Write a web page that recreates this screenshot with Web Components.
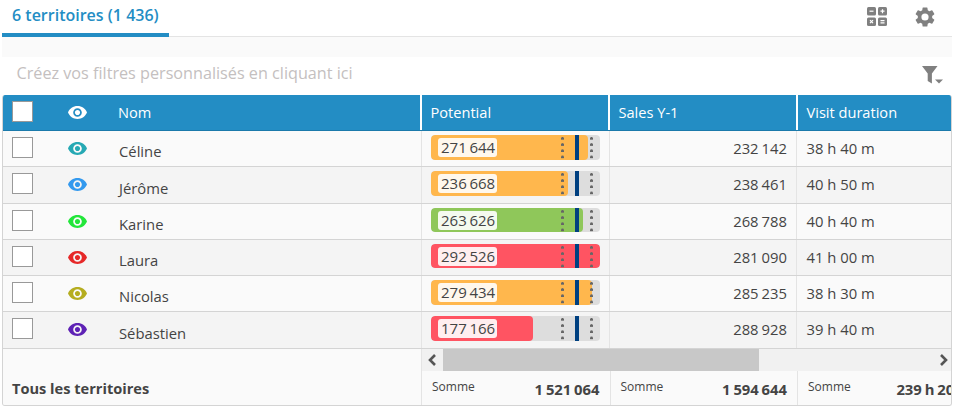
<!DOCTYPE html>
<html lang="fr">
<head>
<meta charset="utf-8">
<title>Territoires</title>
<style>
    html, body { margin: 0; padding: 0; background: #fff; }
    body { font-family: "Open Sans", sans-serif; color: #444; }
</style>
</head>
<body>
<territory-app>
    <tab-bar slot="tabs">6 territoires (1 436)</tab-bar>
    <filter-bar slot="filters">Créez vos filtres personnalisés en cliquant ici</filter-bar>
    <territory-table slot="table">
        <territory-row color="#26a9b4" value="271644" level="orange" sales="232 142" duration="38 h 40 m">Céline</territory-row>
        <territory-row alt color="#3399ee" value="236668" level="orange" sales="238 461" duration="40 h 50 m">Jérôme</territory-row>
        <territory-row color="#22e63a" value="263626" level="green" sales="268 788" duration="40 h 40 m">Karine</territory-row>
        <territory-row alt color="#e62828" value="292526" level="red" sales="281 090" duration="41 h 00 m">Laura</territory-row>
        <territory-row color="#b5ad20" value="279434" level="orange" sales="285 235" duration="38 h 30 m">Nicolas</territory-row>
        <territory-row alt color="#5e22b5" value="177166" level="red" sales="288 928" duration="39 h 40 m">Sébastien</territory-row>
    </territory-table>
</territory-app>

<script>
const EYE_PATH = 'M12 4.5C7 4.5 2.73 7.61 1 12c1.73 4.39 6 7.5 11 7.5s9.27-3.11 11-7.5c-1.73-4.39-6-7.5-11-7.5zM12 17c-2.76 0-5-2.24-5-5s2.24-5 5-5 5 2.24 5 5-2.24 5-5 5zm0-8c-1.66 0-3 1.34-3 3s1.34 3 3 3 3-1.34 3-3-1.34-3-3-3z';
const GEAR_PATH = 'M19.14 12.94c.04-.3.06-.61.06-.94s-.02-.64-.07-.94l2.03-1.58a.49.49 0 0 0 .12-.61l-1.92-3.32a.49.49 0 0 0-.59-.22l-2.39.96a7 7 0 0 0-1.62-.94l-.36-2.54a.48.48 0 0 0-.48-.41h-3.84a.47.47 0 0 0-.47.41l-.36 2.54a7.2 7.2 0 0 0-1.62.94l-2.39-.96a.48.48 0 0 0-.59.22L2.73 8.87a.47.47 0 0 0 .12.61l2.03 1.58c-.05.3-.09.63-.09.94s.02.64.07.94l-2.03 1.58a.49.49 0 0 0-.12.61l1.92 3.32c.12.22.37.29.59.22l2.39-.96c.5.38 1.03.7 1.62.94l.36 2.54c.05.24.24.41.48.41h3.84c.24 0 .44-.17.47-.41l.36-2.54a7 7 0 0 0 1.62-.94l2.39.96c.22.08.47 0 .59-.22l1.92-3.32a.47.47 0 0 0-.12-.61l-2.01-1.58zM12 15.6a3.6 3.6 0 1 1 0-7.2 3.6 3.6 0 0 1 0 7.2z';

class TerritoryApp extends HTMLElement {
    constructor() {
        super();
        this.attachShadow({ mode: 'open' });
    }

    connectedCallback() {
        this.shadowRoot.innerHTML = `
            <style>
                :host { display: flex; flex-direction: column; width: 954px; height: 412px; overflow: hidden; }
                .gap { height: 20px; background: #fafafa; margin-left: 2px; margin-right: 2px; }
            </style>
            <slot name="tabs"></slot>
            <div class="gap"></div>
            <slot name="filters"></slot>
            <slot name="table"></slot>
        `;
    }
}

class TabBar extends HTMLElement {
    constructor() {
        super();
        this.attachShadow({ mode: 'open' });
    }

    connectedCallback() {
        this.shadowRoot.innerHTML = `
            <style>
                :host { display: flex; justify-content: space-between; height: 36px; margin: 0 2px; border-bottom: 1px solid #e4e4e4; }
                .tab {
                    box-sizing: border-box;
                    width: 167px;
                    height: 38px;
                    padding: 2px 0 0 10px;
                    border-bottom: 5px solid #238dc4;
                    color: #238dc4;
                    font: 600 16px/26px "Open Sans", sans-serif;
                    white-space: nowrap;
                }
                .tools { display: flex; gap: 28px; padding: 7px 15px 0 0; }
                svg { display: block; fill: #808080; }
            </style>
            <div class="tab"><slot></slot></div>
            <div class="tools">
                <svg width="20" height="19" viewBox="0 0 20 19">
                    <rect x="0" y="0" width="9" height="8.5" rx="1.5"/>
                    <rect x="11" y="0" width="9" height="8.5" rx="1.5"/>
                    <rect x="0" y="10.5" width="9" height="8.5" rx="1.5"/>
                    <rect x="11" y="10.5" width="9" height="8.5" rx="1.5"/>
                    <g stroke="#fff" stroke-width="1.2" fill="none">
                        <path d="M2.5 4.2h4"/>
                        <path d="M13.5 4.2h4M15.5 2.2v4"/>
                        <path d="M3 13.2l3 3M6 13.2l-3 3"/>
                        <path d="M13.5 13.6h4M13.5 15.8h4"/>
                    </g>
                </svg>
                <svg width="24" height="24" viewBox="0 0 24 24" style="margin:-2px 0 0 -2px"><path d="${GEAR_PATH}"/></svg>
            </div>
        `;
    }
}

class FilterBar extends HTMLElement {
    constructor() {
        super();
        this.attachShadow({ mode: 'open' });
    }

    connectedCallback() {
        this.shadowRoot.innerHTML = `
            <style>
                :host {
                    display: flex;
                    justify-content: space-between;
                    align-items: flex-start;
                    box-sizing: border-box;
                    height: 38px;
                    padding: 5px 11px 0 16.5px;
                    color: #c4c0c0;
                    font: 400 16.2px/22px "Open Sans", sans-serif;
                }
                svg { display: block; fill: #808080; margin-top: 4px; }
            </style>
            <span><slot></slot></span>
            <svg width="21" height="18" viewBox="0 0 21 18">
                <path d="M0 0h15.5l-5.6 7.6v10l-4.2-2.6V7.6z"/>
                <path d="M13 13.5h8l-4 4z"/>
            </svg>
        `;
    }
}

class EyeIcon extends HTMLElement {
    constructor() {
        super();
        this.attachShadow({ mode: 'open' });
    }

    connectedCallback() {
        const color = this.getAttribute('color') || '#fff';
        this.shadowRoot.innerHTML = `
            <style>
                :host { display: block; width: 19px; height: 13px; }
                svg { display: block; fill: ${color}; }
            </style>
            <svg width="19" height="13" viewBox="1 4.5 22 15"><path d="${EYE_PATH}"/></svg>
        `;
    }
}

class CheckBox extends HTMLElement {
    constructor() {
        super();
        this.attachShadow({ mode: 'open' });
    }

    connectedCallback() {
        this.shadowRoot.innerHTML = `
            <style>
                :host { display: block; box-sizing: border-box; width: 21px; height: 21px; background: #fff; border: 1px solid #999; }
            </style>
        `;
    }
}

class GaugeBar extends HTMLElement {
    constructor() {
        super();
        this.attachShadow({ mode: 'open' });
    }

    connectedCallback() {
        const value = Number(this.getAttribute('value'));
        const colors = { orange: '#ffb74d', green: '#8fc75a', red: '#ff5462' };
        const pct = value / 292526 * 100;
        const label = String(value).replace(/(\d{3})$/, ' $1');
        this.shadowRoot.innerHTML = `
            <style>
                :host { display: block; position: relative; width: 169px; height: 24.6px; background: #ddd; border-radius: 4px; overflow: hidden; }
                .fill { height: 100%; width: ${pct}%; background: ${colors[this.getAttribute('level')]}; border-radius: 4px; }
                .chip {
                    position: absolute;
                    left: 7px;
                    top: 3px;
                    box-sizing: border-box;
                    width: 59px;
                    height: 19px;
                    padding-left: 3px;
                    background: rgba(255, 255, 255, 0.9);
                    border-radius: 3px;
                    color: #444;
                    font: 400 15px/19px "Open Sans", sans-serif;
                    word-spacing: -1.2px;
                    white-space: nowrap;
                }
                .dots {
                    position: absolute;
                    top: 2px;
                    bottom: 0;
                    width: 3px;
                    background: radial-gradient(circle at 1.5px 1.5px, #666 1.3px, transparent 1.6px) 0 0 / 3px 6.2px repeat-y;
                }
                .target { position: absolute; left: 144px; top: 0; bottom: 0; width: 4px; background: #004080; }
            </style>
            <div class="fill"></div>
            <span class="dots" style="left:130px"></span>
            <span class="dots" style="left:159px"></span>
            <span class="target"></span>
            <span class="chip">${label}</span>
        `;
    }
}

class TerritoryRow extends HTMLElement {
    constructor() {
        super();
        this.attachShadow({ mode: 'open' });
    }

    connectedCallback() {
        const a = name => this.getAttribute(name);
        this.shadowRoot.innerHTML = `
            <style>
                :host {
                    display: grid;
                    grid-template-columns: 418px 187.5px 187.5px 187.5px;
                    box-sizing: border-box;
                    height: 36.25px;
                    background: #fafafa;
                    border-bottom: 1px solid #d4d4d4;
                    font: 400 14.8px "Open Sans", sans-serif;
                    color: #444;
                }
                :host([alt]) { background: #f4f4f4; }
                .main { display: flex; padding-left: 9px; }
                check-box { margin-top: 6px; }
                eye-icon { margin: 11px 0 0 35px; }
                .name { margin-left: 32px; padding-top: 10.3px; line-height: 20px; }
                .gauge { box-sizing: border-box; padding: 4px 0 0 9px; border-left: 1px solid #e4e4e4; }
                .num { box-sizing: border-box; padding: 7px 9px 0 0; text-align: right; line-height: 20px; border-left: 1px solid #e4e4e4; word-spacing: -0.8px; }
                .time { box-sizing: border-box; padding: 7px 0 0 9.5px; line-height: 20px; border-left: 1px solid #e4e4e4; }
            </style>
            <div class="main">
                <check-box></check-box>
                <eye-icon color="${a('color')}"></eye-icon>
                <span class="name"><slot></slot></span>
            </div>
            <div class="gauge"><gauge-bar value="${a('value')}" level="${a('level')}"></gauge-bar></div>
            <div class="num">${a('sales')}</div>
            <div class="time">${a('duration')}</div>
        `;
    }
}

class TerritoryTable extends HTMLElement {
    constructor() {
        super();
        this.attachShadow({ mode: 'open' });
    }

    connectedCallback() {
        this.shadowRoot.innerHTML = `
            <style>
                :host {
                    display: block;
                    box-sizing: border-box;
                    width: 950px;
                    height: 311px;
                    margin-left: 2px;
                    border: 1px solid #d4d4d4;
                    border-top: 0;
                    border-radius: 3px;
                    overflow: hidden;
                    font-family: "Open Sans", sans-serif;
                }
                .head {
                    display: grid;
                    grid-template-columns: 417px 188px 188px 188px;
                    height: 36px;
                    background: #238dc4;
                    border-bottom: 1px solid #1b7aab;
                    box-sizing: border-box;
                    color: #fff;
                    font-size: 14.6px;
                    line-height: 34px;
                }
                .head > div { box-sizing: border-box; padding-left: 8.5px; border-left: 2px solid #fff; }
                .head .main { display: flex; padding-left: 9px; border-left: 0; }
                .head check-box { margin-top: 6px; }
                .head eye-icon { margin: 11px 0 0 35px; }
                .head .nom { margin-left: 31px; }
                .foot { display: grid; grid-template-columns: 418px 1fr; height: 56px; background: #fafafa; }
                .total { padding: 29px 0 0 9px; font: 700 14.6px/20px "Open Sans", sans-serif; color: #444; white-space: nowrap; }
                .right { border-left: 1px solid #e4e4e4; overflow: hidden; min-width: 0; }
                .scroll { display: flex; align-items: center; height: 22px; background: #f1f1f1; }
                .scroll .btn { flex: none; width: 21px; display: flex; justify-content: center; }
                .scroll .btn.end { width: 20px; justify-content: flex-end; padding-right: 3px; }
                .scroll .thumb { flex: none; width: 316px; height: 22px; background: #c8c8c8; }
                .scroll .fill { flex: 1; }
                .scroll svg { display: block; fill: none; stroke: #555; stroke-width: 2.6; }
                .sums { display: grid; grid-template-columns: 187.5px 187.5px 187.5px; }
                .sum { box-sizing: border-box; height: 34px; display: flex; justify-content: space-between; padding: 0 10px 0 10px; border-left: 1px solid #e4e4e4; white-space: nowrap; }
                .sum:first-child { border-left: 0; }
                .sum:last-child { padding-right: 13px; }
                .sum span { font-size: 12px; line-height: 16px; padding-top: 8px; color: #444; }
                .sum b { font-size: 14.8px; line-height: 20px; padding-top: 8px; font-weight: 700; color: #444; word-spacing: -1px; }
            </style>
            <div class="head">
                <div class="main">
                    <check-box></check-box>
                    <eye-icon color="#fff"></eye-icon>
                    <span class="nom">Nom</span>
                </div>
                <div>Potential</div>
                <div>Sales Y-1</div>
                <div>Visit duration</div>
            </div>
            <slot></slot>
            <div class="foot">
                <div class="total">Tous les territoires</div>
                <div class="right">
                    <div class="scroll">
                        <div class="btn"><svg width="9" height="12" viewBox="0 0 9 12"><path d="M7 1L2 6l5 5"/></svg></div>
                        <div class="thumb"></div>
                        <div class="fill"></div>
                        <div class="btn end"><svg width="9" height="12" viewBox="0 0 9 12"><path d="M2 1l5 5-5 5"/></svg></div>
                    </div>
                    <div class="sums">
                        <div class="sum"><span>Somme</span><b>1 521 064</b></div>
                        <div class="sum"><span>Somme</span><b>1 594 644</b></div>
                        <div class="sum"><span>Somme</span><b>239 h 20 m</b></div>
                    </div>
                </div>
            </div>
        `;
    }
}

customElements.define('check-box', CheckBox);
customElements.define('eye-icon', EyeIcon);
customElements.define('gauge-bar', GaugeBar);
customElements.define('territory-row', TerritoryRow);
customElements.define('territory-table', TerritoryTable);
customElements.define('tab-bar', TabBar);
customElements.define('filter-bar', FilterBar);
customElements.define('territory-app', TerritoryApp);
</script>
</body>
</html>
